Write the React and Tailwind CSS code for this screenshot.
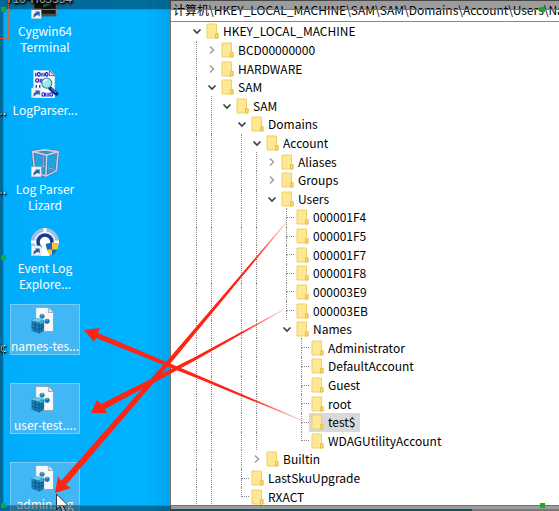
const TREE = [
  { name: "HKEY_LOCAL_MACHINE", level: 0, state: "open" },
  { name: "BCD00000000", level: 1, state: "closed" },
  { name: "HARDWARE", level: 1, state: "closed" },
  { name: "SAM", level: 1, state: "open" },
  { name: "SAM", level: 2, state: "open" },
  { name: "Domains", level: 3, state: "open" },
  { name: "Account", level: 4, state: "open" },
  { name: "Aliases", level: 5, state: "closed" },
  { name: "Groups", level: 5, state: "closed" },
  { name: "Users", level: 5, state: "open" },
  { name: "000001F4", level: 6 },
  { name: "000001F5", level: 6 },
  { name: "000001F7", level: 6 },
  { name: "000001F8", level: 6 },
  { name: "000003E9", level: 6 },
  { name: "000003EB", level: 6 },
  { name: "Names", level: 6, state: "open" },
  { name: "Administrator", level: 7 },
  { name: "DefaultAccount", level: 7 },
  { name: "Guest", level: 7 },
  { name: "root", level: 7 },
  { name: "test$", level: 7, selected: true },
  { name: "WDAGUtilityAccount", level: 7 },
  { name: "Builtin", level: 4, state: "closed" },
  { name: "LastSkuUpgrade", level: 3 },
  { name: "RXACT", level: 3 },
];

// Tells whether the vertical guide of a level continues below a row.
function hasGuide(index, level) {
  if (level < 2) return true;
  for (let i = index + 1; i < TREE.length; i++) {
    if (TREE[i].level < level) return false;
    if (TREE[i].level === level) return true;
  }
  return false;
}

function Folder() {
  return (
    <svg viewBox="0 0 13 16" className="h-4 w-[13px] shrink-0" aria-hidden="true">
      <path d="M1 1h9.500v9.500H12V15H1z" fill="#ffe794" stroke="#efd064" strokeWidth="1" />
      <path d="M9.500 15v-4.500H12V15z" fill="#fbdc70" stroke="#e5c04c" strokeWidth="1" />
    </svg>
  );
}

function Chevron({ state }) {
  return (
    <svg viewBox="0 0 10 10" className="h-[10px] w-[10px]" fill="none" aria-hidden="true">
      {state === "open" ? (
        <path d="M1.500 3.500 5 7l3.500-3.500" stroke="#404040" strokeWidth="1.700" />
      ) : (
        <path d="M3 1.500 6.500 5 3 8.500" stroke="#a0a0a0" strokeWidth="1.500" />
      )}
    </svg>
  );
}

function TreeRow({ node, index }) {
  const { level, state, selected, name } = node;
  return (
    <li className="flex min-h-0 items-center pl-[18px]">
      {Array.from({ length: level }, (_, l) => (
        <span key={l} className="flex w-[15px] shrink-0 justify-center self-stretch">
          {hasGuide(index, l) && <span className="border-l border-dotted border-[#8c8c8c]" />}
        </span>
      ))}
      {state ? (
        <button
          type="button"
          aria-label={(state === "open" ? "Collapse " : "Expand ") + name}
          className="flex w-[15px] shrink-0 justify-center"
        >
          <Chevron state={state} />
        </button>
      ) : (
        <span className="flex w-[15px] shrink-0 flex-col self-stretch pl-[7px]">
          <span className="flex-1 border-b border-l border-dotted border-[#8c8c8c]" />
          <span
            className={
              hasGuide(index, level) ? "flex-1 border-l border-dotted border-[#8c8c8c]" : "flex-1"
            }
          />
        </span>
      )}
      <span
        className={
          "flex items-center gap-1 self-stretch pr-1 pl-[2px] " + (selected ? "bg-[#d9d9d9]" : "")
        }
      >
        <Folder />
        <span>{name}</span>
      </span>
    </li>
  );
}

function Shortcut() {
  return (
    <>
      <rect x="0.500" y="20.500" width="11" height="11" fill="#f4f4f4" stroke="#c4cbd2" strokeWidth="0.600" />
      <path d="M3 30.500c-.5-4 1-5.500 3-5.500l-1.500-1.500H10V29l-1.700-1.700C6 27.500 5 28.500 3 30.500z" fill="#2862a8" />
    </>
  );
}

function CygwinIcon() {
  return (
    <svg viewBox="0 0 32 32" className="size-7" aria-hidden="true">
      <path d="M3 2h26v25H3z" fill="#161818" stroke="#85898a" strokeWidth="1.500" />
      <path d="m14 12 9 3-9 3" fill="#2b9c47" stroke="#43c463" strokeWidth="1" />
      <path d="M22 21h5" stroke="#8a9090" strokeWidth="1.500" />
      <path d="M3 26h26v3H3z" fill="#4a4f50" />
      <Shortcut />
    </svg>
  );
}

function LogParserIcon() {
  return (
    <svg viewBox="0 0 32 32" className="size-7" aria-hidden="true">
      <path d="M3 .500h19l5 5V32H3z" fill="#fff" stroke="#d4dbe4" strokeWidth="0.600" />
      <path d="M21 .500v6h6z" fill="#dbe3ef" stroke="#333" strokeWidth="0.800" />
      <g fill="none" stroke="#1717c9" strokeWidth="1.400">
        <path d="M5.500 3v4.500M12.500 3v4.500M15 3v4.500M10.500 10v4.500M12.500 10v4.500M6 17v4M10 17v4M17 26v4.500M19.500 26v4.500" />
        <ellipse cx="9" cy="5" rx="1.600" ry="2" />
        <ellipse cx="18" cy="5" rx="1.400" ry="2" />
        <ellipse cx="7" cy="12" rx="1.600" ry="2" />
        <ellipse cx="14" cy="28" rx="1.600" ry="2" />
        <ellipse cx="23" cy="28" rx="1.600" ry="2" />
      </g>
      <path d="m22 21 7 6" stroke="#101d70" strokeWidth="4.500" strokeLinecap="round" />
      <path d="m23 21 6 5" stroke="#2787ed" strokeWidth="1.800" />
      <circle cx="18" cy="15" r="5.800" fill="#8ff0ee" stroke="#497d8d" strokeWidth="1.300" />
      <path d="M14.500 14q1-3 4-3" fill="none" stroke="#fff" strokeWidth="1.500" />
      <Shortcut />
    </svg>
  );
}

function CubeIcon() {
  return (
    <svg viewBox="0 0 32 32" className="size-7" aria-hidden="true">
      <path d="M2 3 15 1l16 2-2 22-12 6-13-4z" fill="#319cce" fillOpacity="0.600" />
      <g fill="none" strokeLinejoin="round">
        <path d="M14 2v18M4 25l10-5 15 4" stroke="#59648f" strokeWidth="2.200" />
        <path d="M14 2v18M4 25l10-5 15 4" stroke="#a3b5db" strokeWidth="1.200" />
        <path d="m2 3 13-2 16 2-13 4zM2 3l2 23 13 5 12-6 2-22M18 7l-1 24" stroke="#59648f" strokeWidth="3" />
        <path d="m2 3 13-2 16 2-13 4zM2 3l2 23 13 5 12-6 2-22M18 7l-1 24" stroke="#c7d1eb" strokeWidth="1.800" />
      </g>
      <Shortcut />
    </svg>
  );
}

function EventLogIcon() {
  return (
    <svg viewBox="0 0 32 32" className="size-7" aria-hidden="true">
      <circle cx="16" cy="16" r="14" fill="#e6f0fa" stroke="#9cc0e8" strokeWidth="4" />
      <path d="M16 0v8M0 16h7M25 16h7" stroke="#fff" strokeWidth="3.500" />
      <circle cx="16" cy="16" r="8" fill="#fff" stroke="#173b91" strokeWidth="4" />
      <path d="M11 23q5-8 10 0v9H11z" fill="#fff" />
      <path d="M24 16q3 2 7 2 0 9-7 13.500Q17 27 17 18q4 0 7-2z" fill="#1b68b8" />
      <path d="M24 16v8.500h6.500Q31 22 31 18q-4 0-7-2z" fill="#ffc52c" />
      <path d="M24 24.500v7q-5-3-6.500-7z" fill="#ffc52c" />
      <Shortcut />
    </svg>
  );
}

function RegIcon() {
  return (
    <svg viewBox="0 0 32 32" className="size-7" aria-hidden="true">
      <path d="M5 .500h15l6 6V29H5z" fill="#f8f8f8" stroke="#8c979f" strokeWidth="0.900" />
      <path d="M20 .500v6h6" fill="#dfe4e7" stroke="#8c979f" strokeWidth="0.900" />
      <path d="m0 16 6-3 9 2.500V28l-6 3.500L0 28z" fill="#1b80b8" />
      <path d="m0 16 9 2.500 6-3L6 13z" fill="#6bc9ec" />
      <path
        d="M9 18.500v13M4.500 17.500v12M12 17v13M0 20l9 2.500 6-3M0 24l9 2.500 6-3"
        stroke="#0b527f"
        strokeWidth="0.900"
        fill="none"
      />
      <circle cx="12.500" cy="11" r="3" fill="#1688bd" />
      <circle cx="18.500" cy="17" r="3" fill="#1279ae" />
      <circle cx="11.500" cy="18" r="2.200" fill="#38acd9" />
      <path d="M11 10q1-1.500 2.500-.5M17 16q1-1.500 2.500-.5" stroke="#9fe1f5" fill="none" />
    </svg>
  );
}

const SHORTCUTS = [
  { lines: ["Cygwin64", "Terminal"], Icon: CygwinIcon },
  { lines: ["LogParser..."], Icon: LogParserIcon },
  { lines: ["Log Parser", "Lizard"], Icon: CubeIcon },
  { lines: ["Event Log", "Explore..."], Icon: EventLogIcon },
  { lines: ["names-tes..."], Icon: RegIcon, selected: true },
  { lines: ["user-test...."], Icon: RegIcon, selected: true },
  { lines: ["admin.reg"], Icon: RegIcon, selected: true },
];

// Ends of the labels in the icon column to the left, one for each row.
const NEIGHBOUR_LABELS = ["", "..", "..", "", "c", "", ""];

function DesktopItem({ item }) {
  const { lines, Icon, selected } = item;
  return (
    <li className="h-[79px] shrink-0">
      <button
        type="button"
        className={
          "flex w-[70px] flex-col items-center gap-1 border pt-[2px] " +
          (selected ? "h-[51px] border-[#7bcdf9] bg-[#41b8f5]" : "border-transparent")
        }
      >
        <Icon />
        <span className="flex flex-col text-center leading-4 whitespace-nowrap">
          {lines.map((line) => (
            <span key={line}>{line}</span>
          ))}
        </span>
      </button>
    </li>
  );
}

function Arrows() {
  return (
    <svg className="pointer-events-none absolute top-0 left-0 h-[511px] w-[559px]" viewBox="0 0 559 511" aria-hidden="true">
      <defs>
        <linearGradient id="a" gradientUnits="userSpaceOnUse" x1="287" y1="222" x2="255" y2="260">
          <stop stopColor="#ff2a1a" stopOpacity="0.250" />
          <stop offset="1" stopColor="#ff2414" />
        </linearGradient>
        <linearGradient id="b" gradientUnits="userSpaceOnUse" x1="284" y1="309" x2="240" y2="333">
          <stop stopColor="#ff2a1a" stopOpacity="0.250" />
          <stop offset="1" stopColor="#ff2414" />
        </linearGradient>
        <linearGradient id="c" gradientUnits="userSpaceOnUse" x1="302" y1="420" x2="250" y2="399">
          <stop stopColor="#ff2a1a" stopOpacity="0.250" />
          <stop offset="1" stopColor="#ff2414" />
        </linearGradient>
      </defs>
      <path d="m286 222 .6.5L175 358 66 485l5 3-16 5 3-17 3 5L172 355z" fill="url(#a)" />
      <path d="m283 309.500.4.600L196 360l-91 49 2 4-16 0 6-13 4 4L195 357z" fill="url(#b)" />
      <path d="m302 420-.3.700L194 377l-98-39-2 4-10-12 16-2-2 5 97 41z" fill="url(#c)" />
      <path
        d="M56.500 494v15.500l3.500-3 3 6.500 3-1.500-3-6h5z"
        fill="#fff"
        stroke="#222"
        strokeWidth="0.900"
      />
    </svg>
  );
}

function Handle({ place }) {
  return <span className={"absolute size-[5px] bg-[#16ad25] " + place} />;
}

function CaptureFrame() {
  return (
    <div className="pointer-events-none absolute inset-0 overflow-hidden">
      <div className="absolute top-[9px] -right-2 bottom-[5px] left-[3px] border border-[#20a83a] shadow-[0_0_0_40px_rgba(0,0,0,0.39)]" />
      <Handle place="top-[7px] left-px" />
      <Handle place="top-[255px] left-px" />
      <Handle place="bottom-[3px] left-px" />
      <Handle place="top-[7px] right-[14px]" />
      <Handle place="right-[14px] bottom-[3px]" />
      <div className="absolute top-0 left-0 h-[39px] w-[9px] border-r border-b border-dotted border-[#c76c3c]" />
    </div>
  );
}

export default function App() {
  return (
    <main className="relative flex h-screen min-h-[511px] overflow-hidden bg-[#00aeff] font-['Noto_Sans_CJK_SC','Open_Sans',sans-serif] text-xs text-black">
      <div className="relative flex w-[170px] shrink-0 overflow-hidden bg-linear-to-r from-[#00adfd] via-[#00b2ff] via-85% to-[#00a5ee] text-white [text-shadow:1px_1px_1px_#000,0_1px_2px_#000,1px_1px_3px_#000]">
        <ul className="-mt-3 flex w-[6px] flex-col items-end leading-4">
          {NEIGHBOUR_LABELS.map((text, i) => (
            <li key={i} className="h-[79px] shrink-0 pt-[35px]">
              {text}
            </li>
          ))}
        </ul>
        <ul className="-mt-3 flex flex-col pl-1">
          {SHORTCUTS.map((item) => (
            <DesktopItem key={item.lines[0]} item={item} />
          ))}
        </ul>
        <span className="absolute -top-[10px] left-[6px] leading-4">710-H65334</span>
      </div>
      <section className="flex min-w-0 flex-1 flex-col border-l border-[#777] bg-white">
        <header className="flex h-[22px] shrink-0 items-center overflow-hidden border-t border-b border-t-[#777] border-b-[#828790] pb-[2px] pl-[2px] leading-4 whitespace-nowrap">
          {"计算机\\HKEY_LOCAL_MACHINE\\SAM\\SAM\\Domains\\Account\\Users\\Names"}
        </header>
        <ul className="grid flex-1 auto-rows-fr leading-4 whitespace-nowrap">
          {TREE.map((node, i) => (
            <TreeRow key={i} node={node} index={i} />
          ))}
        </ul>
        <footer className="flex h-[5px] shrink-0 items-end">
          <span className="h-[2px] w-[301px] bg-[#2a8196]" />
          <span className="h-[2px] flex-1 bg-[#c4c4c4]" />
        </footer>
      </section>
      <Arrows />
      <CaptureFrame />
    </main>
  );
}
